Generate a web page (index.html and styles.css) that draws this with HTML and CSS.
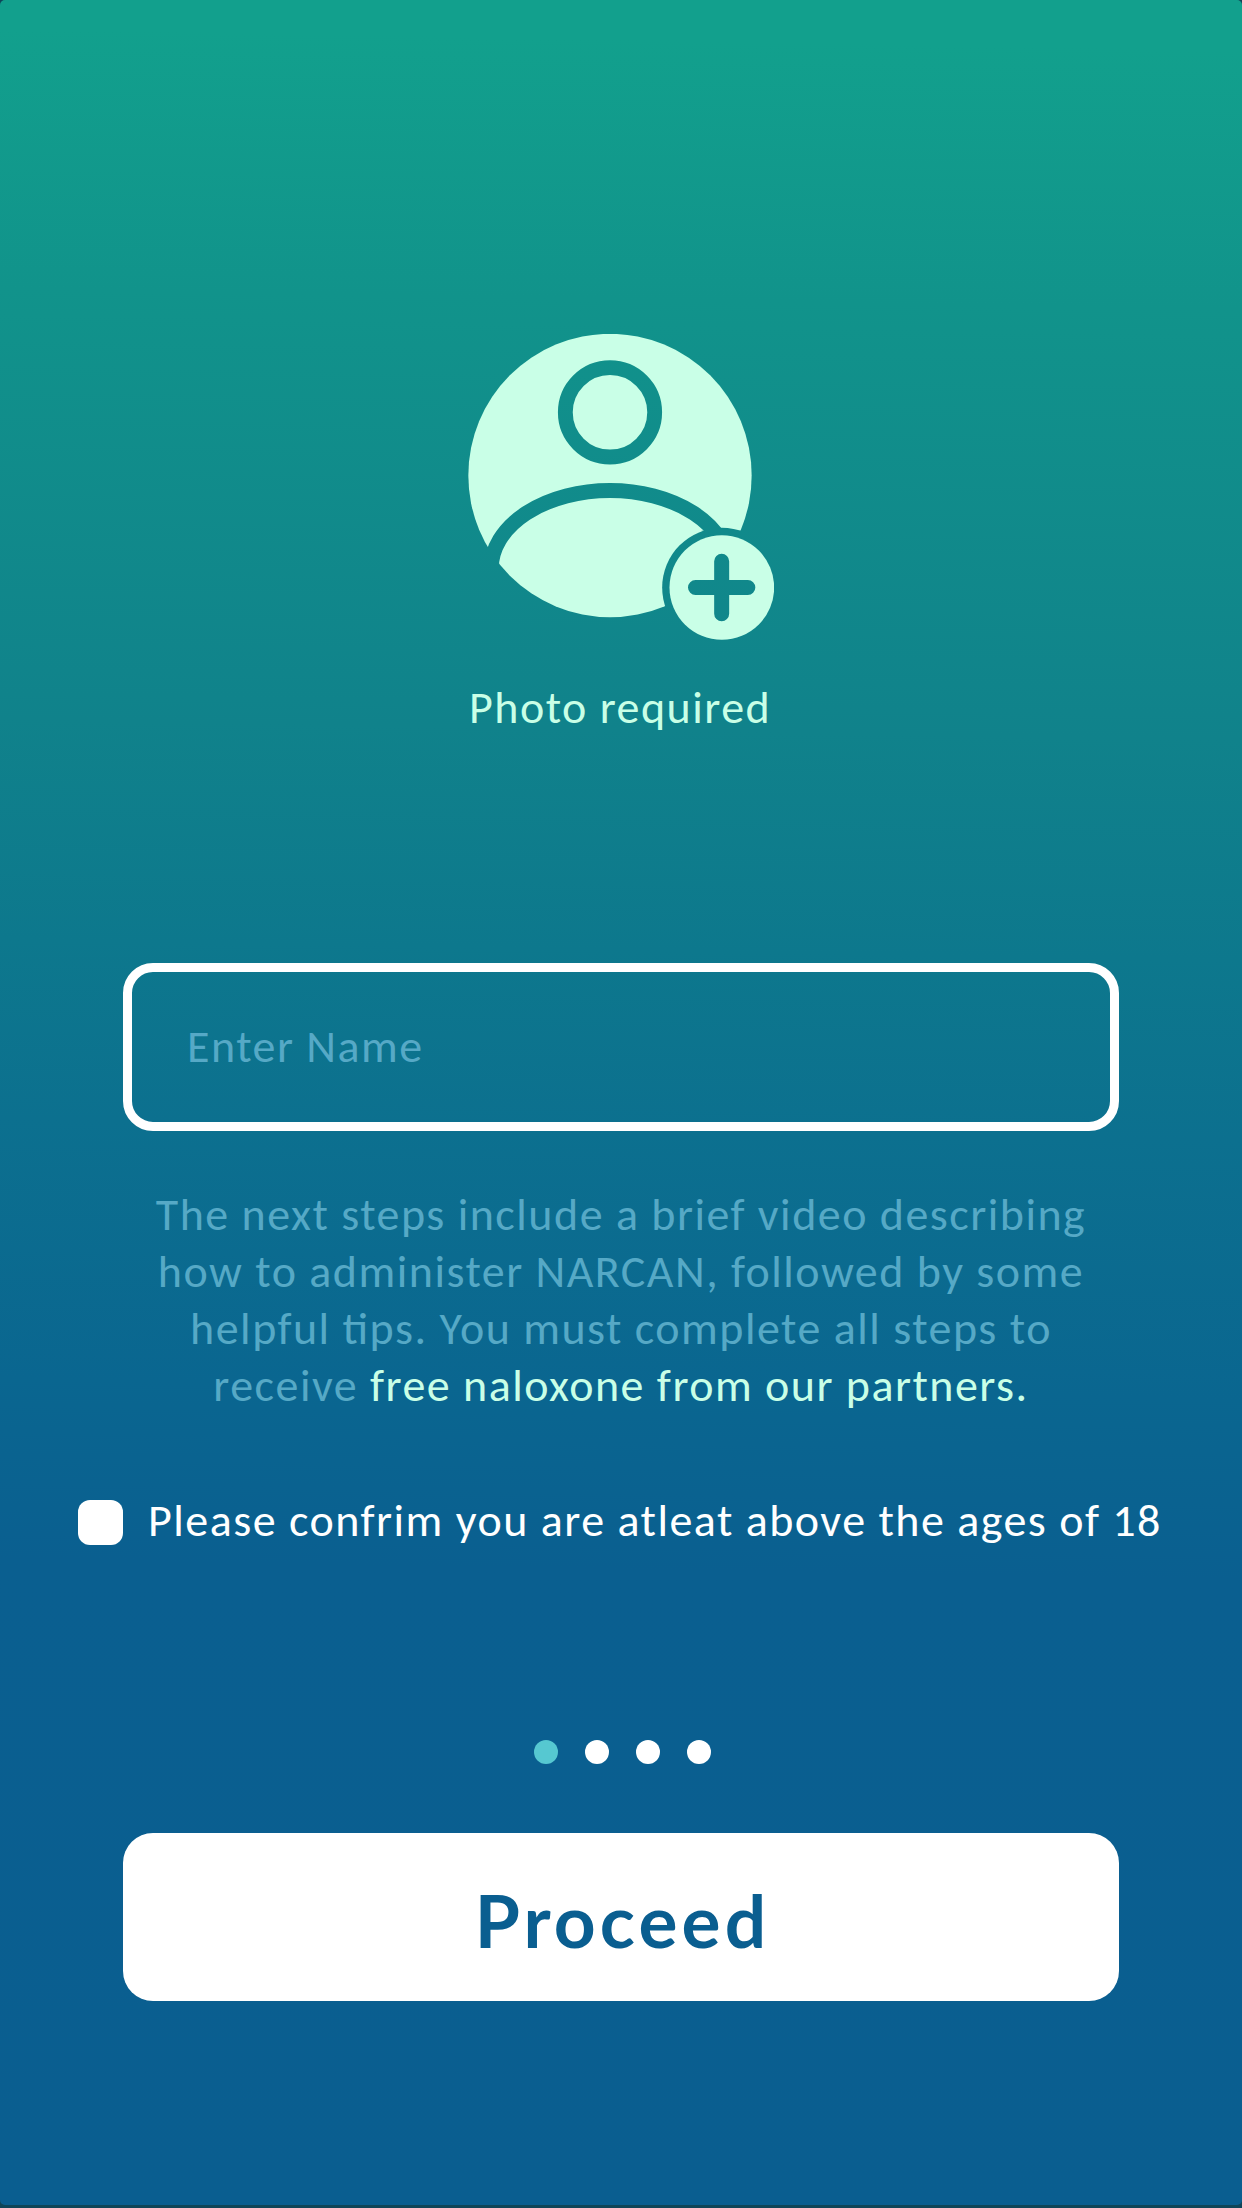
FILE: index.html
```html
<!DOCTYPE html>
<html lang="en">
<head>
<meta charset="utf-8">
<title>Sign up</title>
<link rel="stylesheet" href="styles.css">
</head>
<body>
<main class="screen">
  <section class="photo">
    <svg class="avatar" viewBox="84 72 918 918" aria-hidden="true">
      <defs>
        <clipPath id="upper"><rect x="84" y="500" width="918" height="275"/></clipPath>
        <mask id="person" maskUnits="userSpaceOnUse" x="84" y="72" width="918" height="918">
          <circle cx="510" cy="496.5" r="425" fill="#fff"/>
          <g fill="none" stroke="#000" stroke-width="44.5">
            <circle cx="510" cy="307" r="134"/>
            <ellipse cx="510" cy="775" rx="356" ry="233.5" clip-path="url(#upper)"/>
          </g>
          <circle cx="845.5" cy="832.5" r="179" fill="#000"/>
        </mask>
        <mask id="plus" maskUnits="userSpaceOnUse" x="84" y="72" width="918" height="918">
          <circle cx="845.5" cy="832.5" r="157" fill="#fff"/>
          <path d="M766.5 832.5H923.500M845 754V911" stroke="#000" stroke-width="45" stroke-linecap="round"/>
        </mask>
      </defs>
      <rect x="84" y="72" width="918" height="918" fill="#c9ffe7" mask="url(#person)"/>
      <rect x="84" y="72" width="918" height="918" fill="#c9ffe7" mask="url(#plus)"/>
    </svg>
    <p class="photo-label">Photo required</p>
  </section>
  <div class="field"><span class="placeholder">Enter Name</span></div>
  <p class="intro">
    <span class="line">The next steps include a brief video describing</span>
    <span class="line">how to administer NARCAN, followed by some</span>
    <span class="line">helpful tips. You must complete all steps to</span>
    <span class="line">receive <em class="accent">free naloxone from our partners.</em></span>
  </p>
  <div class="confirm">
    <span class="box"></span>
    <span>Please confrim you are atleat above the ages of 18</span>
  </div>
  <div class="dots"><i class="dot active"></i><i class="dot"></i><i class="dot"></i><i class="dot"></i></div>
  <button class="proceed" type="button">Proceed</button>
</main>
</body>
</html>
```
FILE: styles.css
```css
* { box-sizing: border-box; }
body { margin: 0; background: #0f4558; border-bottom: 3px solid #0f4558; }
p { margin: 0; }
.screen {
  display: flex;
  flex-direction: column;
  width: 1242px;
  height: 2205px;
  padding-top: 334px;
  border-radius: 5px;
  background: linear-gradient(181deg, #12a08d 0, #12a08d 50px, #11938b 310px, #10828b 740px, #0d788d 960px, #0c708f 1140px, #0a6690 1400px, #0a5f90 1580px, #0a5e90 100%);
  font-family: Calibri, Carlito, "Noto Sans", sans-serif;
  font-size: 46px;
  font-feature-settings: "liga" 1;
  letter-spacing: 1.48px;
  line-height: 57px;
  white-space: nowrap;
}
.photo { display: flex; flex-direction: column; padding-left: 468px; }
.avatar { display: block; width: 306px; height: 306px; }
.photo-label { margin-top: 39px; padding-left: 1px; color: #c9ffe7; }
.field {
  display: flex;
  align-items: center;
  width: 996px;
  height: 168px;
  margin: 227px 0 0 123px;
  padding: 0 0 2px 55px;
  border: 9px solid #fff;
  border-radius: 30px;
}
.placeholder { color: #56a9c6; }
.intro { margin-top: 55px; color: #56a9c6; text-align: center; }
.line { display: block; }
.accent { font-style: normal; color: #c9ffe7; }
.confirm { display: flex; align-items: center; gap: 25px; margin: 80px 0 0 78px; color: #fff; line-height: 53px; padding-bottom: 4px; }
.box { flex: none; width: 45px; height: 45px; margin-top: 3px; border-radius: 12px; background: #fff; }
.dots { display: flex; gap: 27px; margin: 189px 0 0 534px; }
.dot { width: 24px; height: 24px; border-radius: 50%; background: #fff; }
.active { background: #56c8d1; }
.proceed {
  width: 996px;
  height: 168px;
  margin: 69px 0 0 123px;
  padding: 6px 0 0 3px;
  border: 0;
  border-radius: 30px;
  background: #fff;
  color: #0a5e90;
  font: 700 73px/90px Lato, sans-serif;
  letter-spacing: 4.1px;
}
```
